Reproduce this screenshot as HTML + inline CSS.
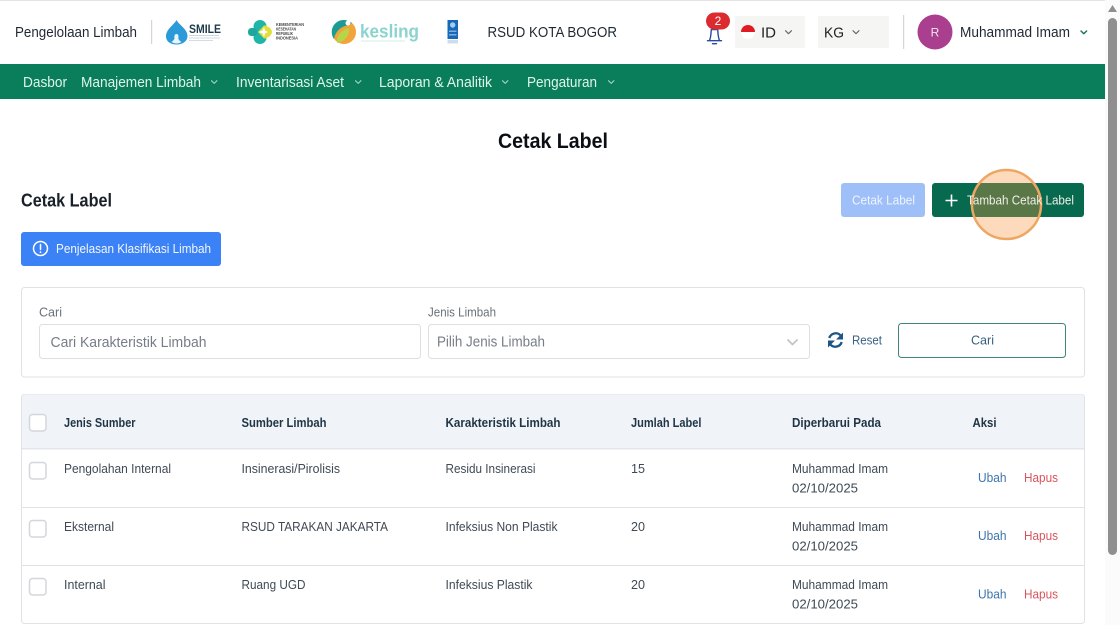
<!DOCTYPE html>
<html lang="id">
<head>
<meta charset="utf-8">
<title>Cetak Label</title>
<style>
html,body{margin:0;padding:0;width:1120px;height:625px;overflow:hidden;background:#fff}
svg{display:block;filter:blur(.3px)}
text{font-family:"Liberation Sans",sans-serif;font-size:13px;fill:#3c4652}
.h{font-size:14.5px;fill:#1f2933}
.n{font-size:14.5px;fill:#dff5ea}
.th{font-weight:bold;font-size:12.5px;fill:#1f3445}
.td{font-size:13px;fill:#3f4a54}
.chev{fill:none;stroke-width:1.100;stroke-linecap:round;stroke-linejoin:round}
.box{fill:#fff;stroke:#d3d6da;stroke-width:1.5}
</style>
</head>
<body>
<svg width="1120" height="625" viewBox="0 0 1120 625" xmlns="http://www.w3.org/2000/svg">
<rect width="1120" height="625" fill="#fff"/>
<rect x="0" y="0" width="1105" height="1" fill="#e4e4e4"/>

<!-- header -->
<text class="h" x="15" y="37" textLength="122" lengthAdjust="spacingAndGlyphs">Pengelolaan Limbah</text>
<rect x="151" y="20" width="1.2" height="24" fill="#d5d5d5"/>

<!-- SMILE logo -->
<path d="M176.500 20C174 25 166 29 166 36.500C166 41 170 44.500 176.500 44.500C183 44.500 187.500 41 187.500 36C187.500 29 179 25 176.500 20Z" fill="#2a9ad8"/>
<path d="M176.500 34c-2 0-2.500 2.500-2 4.500c-.8 1.800-2 2.800-3 3.500c3 2 7 2 10 0c-1.300-.8-2.700-1.800-3.200-3.500c.5-2 .2-4.500-1.800-4.500Z" fill="#e8f5fb"/>
<text x="189" y="33" textLength="32" lengthAdjust="spacingAndGlyphs" style="font-size:11.500px;font-weight:bold;fill:#1c3a4a">SMILE</text>
<rect x="189" y="35" width="30" height="1" fill="#cfd6db"/>
<rect x="189" y="37.500" width="31" height="1" fill="#d3d9de"/>
<rect x="189" y="40" width="24" height="1" fill="#d6dce0"/>

<!-- Kemenkes logo -->
<circle cx="260" cy="26.500" r="6.500" fill="#1fb5a8"/>
<circle cx="260" cy="37.500" r="6.500" fill="#1fb5a8"/>
<rect x="248" y="28" width="9" height="8" rx="3.500" fill="#1fa79c"/>
<path d="M258 32l6-6.500c4 0 8 3.500 8 6.500s-4 6.500-8 6.500Z" fill="#e6dc3c"/>
<path d="M258 32l4.500-1.500l1.500-3.500l1 3.500l3 1.500l-3 1.500l-1 3.500l-1.500-3.500Z" fill="#fff"/>
<text x="276" y="26" textLength="28" lengthAdjust="spacingAndGlyphs" style="font-size:4.500px;font-weight:bold;fill:#444">KEMENTERIAN</text>
<text x="276" y="30.500" textLength="20" lengthAdjust="spacingAndGlyphs" style="font-size:4.500px;font-weight:bold;fill:#444">KESEHATAN</text>
<text x="276" y="35" textLength="17" lengthAdjust="spacingAndGlyphs" style="font-size:4.500px;font-weight:bold;fill:#444">REPUBLIK</text>
<text x="276" y="39.500" textLength="22" lengthAdjust="spacingAndGlyphs" style="font-size:4.500px;font-weight:bold;fill:#444">INDONESIA</text>

<!-- Kesling logo -->
<circle cx="344" cy="32" r="12" fill="#f2a33a"/>
<path d="M344 20A12 12 0 0 0 334 39C335 33 339 28 345 26C348 25 351 24 352 23C349 21 347 20 344 20Z" fill="#1a9c94"/>
<path d="M337 43C336 36 341 30 349 28C350 34 346 41 337 43Z" fill="#b7d548"/>
<circle cx="348" cy="23" r="2.500" fill="#fff"/>
<text x="360" y="37.500" textLength="59" lengthAdjust="spacingAndGlyphs" style="font-size:18.500px;fill:#8ad4cd;font-weight:bold">kesling</text>
<rect x="361" y="40.500" width="44" height="1" fill="#d2ecea"/>

<!-- UNDP -->
<rect x="447.500" y="20" width="10.500" height="19" fill="#1668b8"/>
<circle cx="452.700" cy="25" r="2.700" fill="#a9cbea"/>
<rect x="449" y="30.500" width="7.500" height="1.500" fill="#7fb0dd"/>
<rect x="449" y="34" width="7.500" height="1.500" fill="#7fb0dd"/>
<rect x="447.500" y="40" width="10.500" height="3.500" fill="#cfdcea"/>

<text class="h" x="487.500" y="37" textLength="129.500" lengthAdjust="spacingAndGlyphs">RSUD KOTA BOGOR</text>

<!-- bell -->
<path d="M707.500 40.700h14M712.500 43.700h4M709.500 40.500c1.300-2.500 1.500-6 1.800-11h6.400c.3 5 .5 8.500 1.800 11" fill="none" stroke="#2a4a9e" stroke-width="1.400" stroke-linecap="round" stroke-linejoin="round"/>
<rect x="706" y="12.500" width="24" height="17" rx="8.500" fill="#dc2b2f"/>
<text x="718" y="25" text-anchor="middle" style="font-size:12px;fill:#fff">2</text>

<!-- ID -->
<rect x="735" y="16" width="70" height="32" fill="#f5f5f4"/>
<circle cx="748" cy="32" r="7" fill="#fff"/>
<path d="M741 32a7 7 0 0 1 14 0Z" fill="#e01b24"/>
<text x="761" y="37.500" textLength="15" lengthAdjust="spacingAndGlyphs" style="font-size:15px;fill:#222">ID</text>
<path class="chev" d="M785.500 30.700l3 3l3-3" stroke="#666"/>

<!-- KG -->
<rect x="818" y="16" width="71" height="32" fill="#f5f5f4"/>
<text x="824" y="37.500" textLength="20" lengthAdjust="spacingAndGlyphs" style="font-size:15px;fill:#222">KG</text>
<path class="chev" d="M853 30.700l3 3l3-3" stroke="#666"/>

<rect x="903" y="15" width="1.200" height="34" fill="#d5d5d5"/>
<circle cx="935" cy="32" r="17.500" fill="#a93f8e"/>
<text x="935" y="36.500" text-anchor="middle" style="font-size:12px;fill:#f4e6f0">R</text>
<text class="h" x="960" y="37" textLength="110" lengthAdjust="spacingAndGlyphs">Muhammad Imam</text>
<path class="chev" d="M1081 31l2.800 2.800l2.800-2.800" stroke="#1a6f66" style="stroke-width:1.400"/>

<!-- nav -->
<rect x="0" y="64" width="1105" height="35" fill="#0a7d5a"/>
<text class="n" x="23" y="87" textLength="44" lengthAdjust="spacingAndGlyphs">Dasbor</text>
<text class="n" x="81" y="87" textLength="120" lengthAdjust="spacingAndGlyphs">Manajemen Limbah</text>
<path class="chev" d="M211.500 80.700l2.700 2.700l2.700-2.700" stroke="#9ed6bf"/>
<text class="n" x="236" y="87" textLength="108" lengthAdjust="spacingAndGlyphs">Inventarisasi Aset</text>
<path class="chev" d="M355.500 80.700l2.700 2.700l2.700-2.700" stroke="#9ed6bf"/>
<text class="n" x="379" y="87" textLength="113" lengthAdjust="spacingAndGlyphs">Laporan &amp; Analitik</text>
<path class="chev" d="M502.500 80.700l2.700 2.700l2.700-2.700" stroke="#9ed6bf"/>
<text class="n" x="527" y="87" textLength="70" lengthAdjust="spacingAndGlyphs">Pengaturan</text>
<path class="chev" d="M608.500 80.700l2.700 2.700l2.700-2.700" stroke="#9ed6bf"/>

<!-- titles -->
<text x="498" y="148" textLength="110" lengthAdjust="spacingAndGlyphs" style="font-size:21px;font-weight:bold;fill:#0b0f14">Cetak Label</text>
<text x="21" y="206.500" textLength="91" lengthAdjust="spacingAndGlyphs" style="font-size:18.500px;font-weight:bold;fill:#1a2029">Cetak Label</text>

<!-- action buttons -->
<rect x="841" y="183" width="84" height="34" rx="3" fill="#9fbff8"/>
<text x="852" y="204.500" textLength="63" lengthAdjust="spacingAndGlyphs" style="font-size:12.500px;fill:#eef4ff">Cetak Label</text>
<rect x="932" y="183" width="152" height="34" rx="3" fill="#076a4e"/>
<path d="M951.500 194.500v12M945.500 200.500h12" stroke="#fff" stroke-width="1.600" fill="none"/>
<circle cx="1006.500" cy="204.500" r="34.500" fill="#fb923c" fill-opacity=".34" stroke="#eea763" stroke-width="2.500"/>
<text x="967" y="204.500" textLength="107" lengthAdjust="spacingAndGlyphs" style="font-size:12.500px;fill:#efeee6">Tambah Cetak Label</text>

<!-- info button -->
<rect x="21" y="232" width="200" height="34" rx="3" fill="#3b82f6"/>
<circle cx="40.500" cy="248.500" r="7" fill="none" stroke="#fff" stroke-width="1.500"/>
<path d="M40.500 244.500v5" stroke="#fff" stroke-width="1.500" stroke-linecap="round"/>
<circle cx="40.500" cy="252.200" r=".9" fill="#fff"/>
<text x="56" y="253" textLength="155" lengthAdjust="spacingAndGlyphs" style="font-size:13px;fill:#f2f7ff">Penjelasan Klasifikasi Limbah</text>

<!-- filter card -->
<rect x="21.500" y="287.500" width="1063" height="89.500" rx="3" fill="#fff" stroke="#dfe2e5"/>
<text x="39" y="316.500" textLength="23" lengthAdjust="spacingAndGlyphs" style="font-size:12.500px;fill:#6b7178">Cari</text>
<rect x="39.500" y="324.500" width="381" height="34" rx="3" fill="#fff" stroke="#dcdfe3"/>
<text x="50.500" y="347" textLength="156" lengthAdjust="spacingAndGlyphs" style="font-size:14.500px;fill:#777d85">Cari Karakteristik Limbah</text>
<text x="428" y="316.500" textLength="68" lengthAdjust="spacingAndGlyphs" style="font-size:12.500px;fill:#6b7178">Jenis Limbah</text>
<rect x="428.500" y="324.500" width="381" height="34" rx="3" fill="#fff" stroke="#dcdfe3"/>
<text x="437" y="346.500" textLength="108" lengthAdjust="spacingAndGlyphs" style="font-size:14.500px;fill:#777d85">Pilih Jenis Limbah</text>
<path class="chev" d="M788 340l4.500 4.500l4.500-4.500" stroke="#c2c5c9" style="stroke-width:1.800"/>

<!-- reset -->
<path d="M829.300 338a6.700 6.700 0 0 1 11.200-2.700M841.700 342a6.700 6.700 0 0 1-11.200 2.700" fill="none" stroke="#1c5686" stroke-width="2.300"/>
<path d="M843 332.500v7h-7ZM828 347.500v-7h7Z" fill="#1c5686"/>
<text x="852" y="344.700" textLength="30" lengthAdjust="spacingAndGlyphs" style="font-size:13px;fill:#3a6284">Reset</text>
<rect x="898.500" y="323.500" width="167" height="34" rx="3" fill="#fff" stroke="#3f8578"/>
<text x="971" y="344.700" textLength="23" lengthAdjust="spacingAndGlyphs" style="font-size:13px;fill:#34607e">Cari</text>

<!-- table -->
<rect x="21.500" y="394.500" width="1063" height="229" rx="3" fill="#fff" stroke="#e0e3e6"/>
<path d="M22 449V397.500a3 3 0 0 1 3-3H1081a3 3 0 0 1 3 3V449Z" fill="#f0f4f8"/>
<rect x="22" y="448" width="1062" height="1.500" fill="#e2e6ea"/>
<rect x="22" y="507" width="1062" height="1" fill="#e0e3e6"/>
<rect x="22" y="565" width="1062" height="1" fill="#e0e3e6"/>

<rect class="box" x="29.500" y="414.500" width="16.500" height="16.500" rx="3"/>
<rect class="box" x="29.500" y="462.500" width="16.500" height="16.500" rx="3"/>
<rect class="box" x="29.500" y="520.500" width="16.500" height="16.500" rx="3"/>
<rect class="box" x="29.500" y="578.500" width="16.500" height="16.500" rx="3"/>

<text class="th" x="64" y="427" textLength="71.500" lengthAdjust="spacingAndGlyphs">Jenis Sumber</text>
<text class="th" x="241.500" y="427" textLength="85" lengthAdjust="spacingAndGlyphs">Sumber Limbah</text>
<text class="th" x="445.500" y="427" textLength="115" lengthAdjust="spacingAndGlyphs">Karakteristik Limbah</text>
<text class="th" x="631" y="427" textLength="70.500" lengthAdjust="spacingAndGlyphs">Jumlah Label</text>
<text class="th" x="792" y="427" textLength="89" lengthAdjust="spacingAndGlyphs">Diperbarui Pada</text>
<text class="th" x="972.500" y="427" textLength="24" lengthAdjust="spacingAndGlyphs">Aksi</text>

<!-- row 1 -->
<text class="td" x="64" y="473" textLength="107" lengthAdjust="spacingAndGlyphs">Pengolahan Internal</text>
<text class="td" x="241.500" y="473" textLength="98.500" lengthAdjust="spacingAndGlyphs">Insinerasi/Pirolisis</text>
<text class="td" x="445.500" y="473" textLength="90" lengthAdjust="spacingAndGlyphs">Residu Insinerasi</text>
<text class="td" x="631" y="473" textLength="14" lengthAdjust="spacingAndGlyphs">15</text>
<text class="td" x="792" y="473" textLength="96" lengthAdjust="spacingAndGlyphs">Muhammad Imam</text>
<text class="td" x="792" y="492.500" textLength="66" lengthAdjust="spacingAndGlyphs">02/10/2025</text>
<text x="978" y="482" textLength="28.500" lengthAdjust="spacingAndGlyphs" style="fill:#3c75ac">Ubah</text>
<text x="1024" y="482" textLength="34" lengthAdjust="spacingAndGlyphs" style="fill:#d8545c">Hapus</text>

<!-- row 2 -->
<text class="td" x="64" y="531" textLength="50" lengthAdjust="spacingAndGlyphs">Eksternal</text>
<text class="td" x="241.500" y="531" textLength="146.500" lengthAdjust="spacingAndGlyphs">RSUD TARAKAN JAKARTA</text>
<text class="td" x="445.500" y="531" textLength="112" lengthAdjust="spacingAndGlyphs">Infeksius Non Plastik</text>
<text class="td" x="631" y="531" textLength="14" lengthAdjust="spacingAndGlyphs">20</text>
<text class="td" x="792" y="531" textLength="96" lengthAdjust="spacingAndGlyphs">Muhammad Imam</text>
<text class="td" x="792" y="550.500" textLength="66" lengthAdjust="spacingAndGlyphs">02/10/2025</text>
<text x="978" y="540" textLength="28.500" lengthAdjust="spacingAndGlyphs" style="fill:#3c75ac">Ubah</text>
<text x="1024" y="540" textLength="34" lengthAdjust="spacingAndGlyphs" style="fill:#d8545c">Hapus</text>

<!-- row 3 -->
<text class="td" x="64" y="589" textLength="41.500" lengthAdjust="spacingAndGlyphs">Internal</text>
<text class="td" x="241.500" y="589" textLength="64" lengthAdjust="spacingAndGlyphs">Ruang UGD</text>
<text class="td" x="445.500" y="589" textLength="87" lengthAdjust="spacingAndGlyphs">Infeksius Plastik</text>
<text class="td" x="631" y="589" textLength="14" lengthAdjust="spacingAndGlyphs">20</text>
<text class="td" x="792" y="589" textLength="96" lengthAdjust="spacingAndGlyphs">Muhammad Imam</text>
<text class="td" x="792" y="608.500" textLength="66" lengthAdjust="spacingAndGlyphs">02/10/2025</text>
<text x="978" y="598.500" textLength="28.500" lengthAdjust="spacingAndGlyphs" style="fill:#3c75ac">Ubah</text>
<text x="1024" y="598.500" textLength="34" lengthAdjust="spacingAndGlyphs" style="fill:#d8545c">Hapus</text>

<!-- scrollbar -->
<rect x="1105" y="0" width="15" height="625" fill="#fbfbfb"/>
<path d="M1112.500 5l4.500 7h-9Z" fill="#8f8f8f"/>
<rect x="1108" y="18" width="9" height="537" rx="4.500" fill="#8f8f8f"/>
</svg>
</body>
</html>
